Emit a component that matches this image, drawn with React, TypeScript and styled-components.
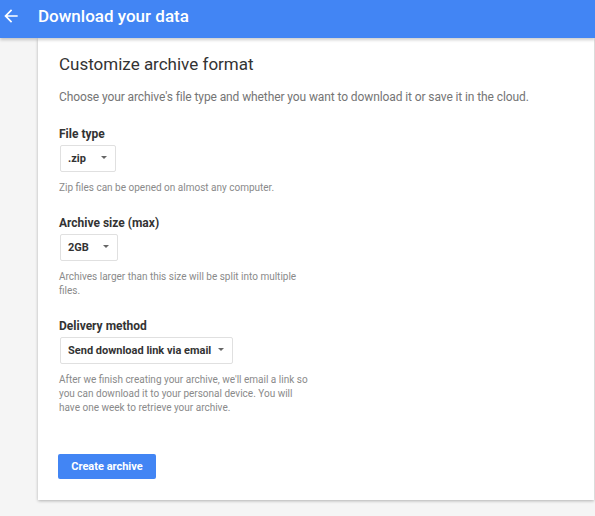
import React from "react";
import styled, { createGlobalStyle } from "styled-components";

const Global = createGlobalStyle`
  html, body {
    margin: 0;
    padding: 0;
    background: #f5f5f5;
    font-family: Roboto, "Noto Sans", Arial, sans-serif;
  }
`;

const Page = styled.div`
  width: 595px;
  min-height: 516px;
  background: #f5f5f5;
`;

const AppBar = styled.header`
  height: 38px;
  background: #4285f4;
  display: flex;
  align-items: center;
  box-shadow: 0 2px 3px rgba(0, 0, 0, 0.2);
  position: relative;
  z-index: 1;
`;

const BackButton = styled.span`
  width: 38px;
  display: flex;
  align-items: center;
  padding-left: 1px;
  box-sizing: border-box;
  margin-top: -6px;
`;

const Title = styled.h1`
  margin: -7px 0 0 0;
  font-size: 17px;
  font-weight: 500;
  color: #fff;
`;

const Body = styled.main`
  padding: 0 1px 0 38px;
`;

const Card = styled.section`
  background: #fff;
  box-shadow: 0 1px 3px rgba(0, 0, 0, 0.28);
  padding: 16px 21px 21px 21px;
  height: 462px;
  box-sizing: border-box;
  display: flex;
  flex-direction: column;
`;

const Heading = styled.h2`
  margin: 0;
  font-size: 17px;
  font-weight: 400;
  color: #333;
  line-height: 20px;
`;

const Intro = styled.p`
  margin: 15px 0 0 0;
  font-size: 12px;
  letter-spacing: -0.1px;
  color: #757575;
  line-height: 16px;
`;

const Field = styled.div<{ $gap: number }>`
  margin-top: ${(p) => p.$gap}px;
  display: flex;
  flex-direction: column;
  align-items: flex-start;
`;

const Label = styled.div`
  font-size: 12px;
  font-weight: 700;
  color: #333;
  line-height: 14px;
`;

const Select = styled.div<{ $width: number }>`
  margin-top: 4px;
  margin-left: 1px;
  width: ${(p) => p.$width}px;
  height: 27px;
  box-sizing: border-box;
  border: 1px solid #e0e0e0;
  border-radius: 2px;
  display: flex;
  align-items: center;
  justify-content: space-between;
  padding: 0 8px 0 7px;
  font-size: 11px;
  font-weight: 700;
  color: #333;
`;

const Caret = styled.span`
  width: 0;
  height: 0;
  border-left: 3px solid transparent;
  border-right: 3px solid transparent;
  border-top: 3px solid #666;
  margin-top: -2px;
`;

const Help = styled.p`
  margin: 9px 0 0 0;
  max-width: 256px;
  font-size: 10px;
  line-height: 14px;
  color: #8a8a8a;
`;

const Primary = styled.button`
  margin-top: 39px;
  margin-left: -1px;
  width: 98px;
  height: 25px;
  border: none;
  border-radius: 2px;
  background: #4285f4;
  color: #fff;
  font-family: inherit;
  font-size: 11px;
  font-weight: 700;
  align-self: flex-start;
  padding: 0;
`;

const Arrow = () => (
  <svg width="20" height="20" viewBox="0 0 24 24" fill="#fff">
    <path d="M20 11H7.83l5.59-5.59L12 4l-8 8 8 8 1.41-1.41L7.83 13H20v-2z" />
  </svg>
);

export default function App() {
  return (
    <Page>
      <Global />
      <AppBar>
        <BackButton>
          <Arrow />
        </BackButton>
        <Title>Download your data</Title>
      </AppBar>
      <Body>
        <Card>
          <Heading>Customize archive format</Heading>
          <Intro>
            Choose your archive's file type and whether you want to download it or save it in the cloud.
          </Intro>
          <Field $gap={22}>
            <Label>File type</Label>
            <Select $width={56}>
              .zip <Caret />
            </Select>
            <Help>Zip files can be opened on almost any computer.</Help>
          </Field>
          <Field $gap={21}>
            <Label>Archive size (max)</Label>
            <Select $width={58}>
              2GB <Caret />
            </Select>
            <Help>Archives larger than this size will be split into multiple files.</Help>
          </Field>
          <Field $gap={21}>
            <Label>Delivery method</Label>
            <Select $width={173}>
              Send download link via email <Caret />
            </Select>
            <Help>
              After we finish creating your archive, we'll email a link so you can download it to your
              personal device. You will have one week to retrieve your archive.
            </Help>
          </Field>
          <Primary>Create archive</Primary>
        </Card>
      </Body>
    </Page>
  );
}
